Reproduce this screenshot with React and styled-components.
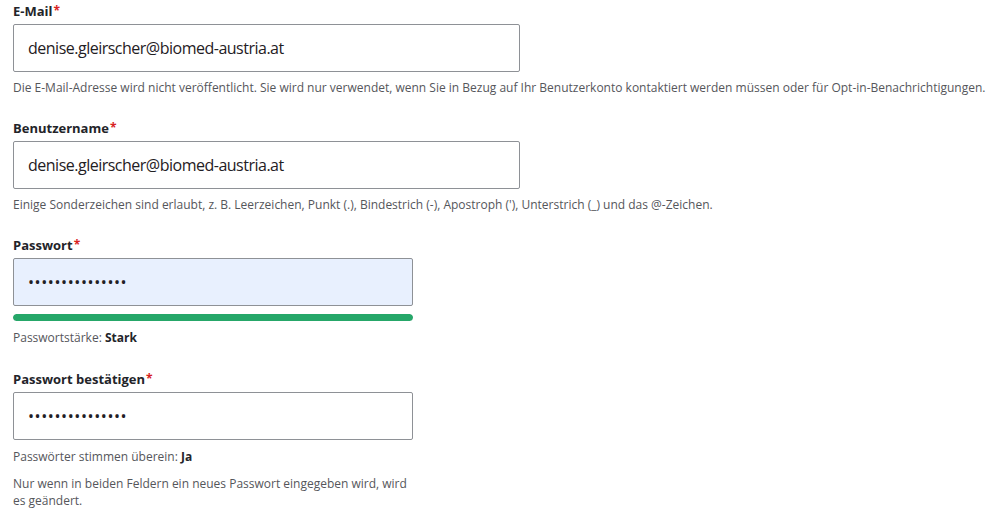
import React from "react";
import styled, { createGlobalStyle } from "styled-components";

const Global = createGlobalStyle`
  html, body { margin: 0; padding: 0; background: #fff; }
  body { font-family: "Open Sans", "Noto Sans", "Liberation Sans", sans-serif; color: #232429; }
`;

const Form = styled.form`
  display: flex;
  flex-direction: column;
  padding: 2px 13px 0;
`;

const Field = styled.div`
  display: flex;
  flex-direction: column;
  margin-bottom: ${(p) => p.$gap ?? 23}px;
`;

const Label = styled.label`
  font-size: 13px;
  font-weight: 700;
  line-height: 18px;
  margin-bottom: 4px;
  color: #232429;
`;

const Req = styled.span`
  color: #d72222;
  margin-left: 1px;
  font-size: 12px;
  vertical-align: top;
`;

const Input = styled.input`
  box-sizing: border-box;
  width: ${(p) => p.$w}px;
  height: 48px;
  margin: 0;
  padding: 0 14px;
  border: 1px solid #8e9196;
  border-radius: 2px;
  background: ${(p) => (p.$autofill ? "#e8f0fe" : "#fff")};
  font-family: inherit;
  font-size: 16px;
  color: #1f2024;
  outline: none;
  letter-spacing: ${(p) => (p.type === "password" ? "0.6px" : "-0.5px")};
`;

const Description = styled.div`
  margin-top: ${(p) => p.$mt || 8}px;
  font-size: 12px;
  line-height: ${(p) => p.$lh || 16}px;
  color: #55565b;
  max-width: ${(p) => (p.$narrow ? "400px" : "none")};
  white-space: ${(p) => (p.$nowrap ? "nowrap" : "normal")};
  b { color: #232429; font-weight: 700; }
`;

const Meter = styled.div`
  margin-top: 8px;
  width: 400px;
  height: 7px;
  border-radius: 4px;
  background: #e3e4e8;
  overflow: hidden;
`;

const MeterFill = styled.div`
  height: 100%;
  border-radius: 4px;
  background: #26a769;
`;

export default function App() {
  const strength = 100;
  return (
    <>
      <Global />
      <Form onSubmit={(e) => e.preventDefault()}>
        <Field>
          <Label>E-Mail<Req>*</Req></Label>
          <Input $w={507} type="email" defaultValue="denise.gleirscher@biomed-austria.at" />
          <Description $nowrap>
            Die E-Mail-Adresse wird nicht veröffentlicht. Sie wird nur verwendet, wenn Sie in Bezug auf Ihr Benutzerkonto kontaktiert werden müssen oder für Opt-in-Benachrichtigungen.
          </Description>
        </Field>
        <Field>
          <Label>Benutzername<Req>*</Req></Label>
          <Input $w={507} type="text" defaultValue="denise.gleirscher@biomed-austria.at" />
          <Description $nowrap>
            Einige Sonderzeichen sind erlaubt, z. B. Leerzeichen, Punkt (.), Bindestrich (-), Apostroph ('), Unterstrich (_) und das @-Zeichen.
          </Description>
        </Field>
        <Field $gap={24}>
          <Label>Passwort<Req>*</Req></Label>
          <Input $w={400} $autofill type="password" defaultValue="aaaaaaaaaaaaaaa" />
          <Meter>
            <MeterFill style={{ width: `${strength}%` }} />
          </Meter>
          <Description $mt={9}>
            Passwortstärke: <b>Stark</b>
          </Description>
        </Field>
        <Field $gap={0}>
          <Label>Passwort bestätigen<Req>*</Req></Label>
          <Input $w={400} type="password" defaultValue="aaaaaaaaaaaaaaa" />
          <Description $mt={9}>
            Passwörter stimmen überein: <b>Ja</b>
          </Description>
          <Description $mt={10} $lh={17} $narrow>
            Nur wenn in beiden Feldern ein neues Passwort eingegeben wird, wird es geändert.
          </Description>
        </Field>
      </Form>
    </>
  );
}
